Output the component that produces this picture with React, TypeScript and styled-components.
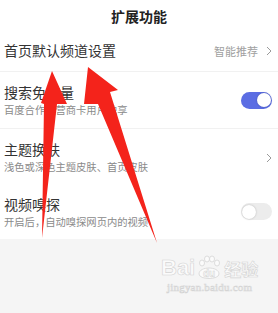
import React from 'react';
import styled, { createGlobalStyle } from 'styled-components';

const GlobalStyle = createGlobalStyle`
    html, body {
        margin: 0;
        padding: 0;
        background: #f5f5f5;
    }
    body {
        font-family: "Noto Sans CJK SC", "Noto Sans", sans-serif;
        -webkit-font-smoothing: antialiased;
    }
`;

const Page = styled.div`
    position: relative;
    width: 278px;
    height: 313px;
    overflow: hidden;
    background: #f5f5f5;
`;

const Panel = styled.div`
    background: #fff;
`;

const Title = styled.div`
    height: 30px;
    display: flex;
    align-items: center;
    justify-content: center;
    font-size: 14px;
    font-weight: 600;
    color: #222;
    padding-top: 1px;
    box-sizing: border-box;
`;

const Row = styled.div<{ $height: number; $divider?: boolean }>`
    position: relative;
    height: ${(p) => p.$height}px;
    display: flex;
    align-items: center;
    justify-content: space-between;
    padding: 0 6px 0 4px;
    box-sizing: border-box;
    border-bottom: ${(p) => (p.$divider ? '1px solid #f1f1f1' : 'none')};
`;

const TextBlock = styled.div`
    display: flex;
    flex-direction: column;
    gap: 2px;
`;

const Label = styled.div`
    font-size: 14px;
    line-height: 17px;
    color: #333;
`;

const Hint = styled.div`
    font-size: 10.3px;
    line-height: 14px;
    color: #8a8a8a;
`;

const Value = styled.div`
    display: flex;
    align-items: center;
    gap: 8px;
    font-size: 11px;
    color: #a0a0a0;
`;

const Chevron = () => (
    <svg width='6' height='10' viewBox='0 0 6 10'>
        <polyline
            points='1,1 5,5 1,9'
            fill='none'
            stroke='#9a9a9a'
            strokeWidth='1'
        />
    </svg>
);

const Track = styled.div<{ $on: boolean; $shift?: number }>`
    position: relative;
    width: 31px;
    height: 17px;
    border-radius: 9px;
    background: ${(p) => (p.$on ? '#5b6de3' : '#ececec')};
    margin-top: ${(p) => p.$shift || 0}px;
`;

const Knob = styled.div<{ $on: boolean }>`
    position: absolute;
    top: 1.5px;
    left: ${(p) => (p.$on ? '15.5px' : '1px')};
    width: 14px;
    height: 14px;
    border-radius: 50%;
    background: #fff;
    box-shadow: 0 0 2px rgba(0, 0, 0, 0.25);
`;

const Switch = ({ on, shift }: { on: boolean; shift?: number }) => (
    <Track $on={on} $shift={shift}>
        <Knob $on={on} />
    </Track>
);

const Watermark = styled.div`
    position: absolute;
    left: 161px;
    top: 255px;
    display: flex;
    flex-direction: column;
    align-items: center;
    color: #fbfbfb;
    -webkit-text-stroke: 0.6px #d4d4d4;
    font-family: "Liberation Sans", Arial, sans-serif;
`;

const MarkLine = styled.div`
    display: flex;
    align-items: flex-end;
    font-size: 22px;
    font-weight: 700;
    line-height: 24px;
`;

const MarkCjk = styled.span`
    font-family: "Noto Sans CJK SC", sans-serif;
    font-size: 17px;
    line-height: 22px;
    margin-left: 1px;
`;

const MarkUrl = styled.div`
    font-family: "Liberation Serif", serif;
    font-size: 11px;
    line-height: 12px;
    margin-top: 1px;
    letter-spacing: 0.2px;
`;

const Paw = () => (
    <svg width='26' height='26' viewBox='0 0 26 26' style={{ margin: '0 1px -1px' }}>
        <g fill='#fbfbfb' stroke='#d4d4d4' strokeWidth='0.8'>
            <ellipse cx='6' cy='8' rx='2.5' ry='3' />
            <ellipse cx='11' cy='4' rx='2.5' ry='3' />
            <ellipse cx='16' cy='4' rx='2.5' ry='3' />
            <ellipse cx='21' cy='8' rx='2.5' ry='3' />
            <path d='M3 19 C3 11 23 11 23 19 C23 25 3 25 3 19 Z' />
        </g>
        <text
            x='13'
            y='22'
            textAnchor='middle'
            fontSize='10'
            fontWeight='700'
            fontFamily='Liberation Sans, sans-serif'
            fill='#fbfbfb'
            stroke='#d4d4d4'
            strokeWidth='0.5'
        >
            du
        </text>
    </svg>
);

const Arrows = styled.svg`
    position: absolute;
    left: 0;
    top: 0;
    pointer-events: none;
`;

const App = () => {
    return (
        <Page>
            <GlobalStyle />
            <Panel>
                <Title>扩展功能</Title>
                <Row $height={42} $divider>
                    <Label>首页默认频道设置</Label>
                    <Value>
                        智能推荐
                        <Chevron />
                    </Value>
                </Row>
                <Row $height={57} $divider>
                    <TextBlock>
                        <Label>搜索免流量</Label>
                        <Hint>百度合作运营商卡用户独享</Hint>
                    </TextBlock>
                    <Switch on />
                </Row>
                <Row $height={57}>
                    <TextBlock>
                        <Label>主题换肤</Label>
                        <Hint>浅色或深色主题皮肤、首页皮肤</Hint>
                    </TextBlock>
                    <Chevron />
                </Row>
                <Row $height={53}>
                    <TextBlock>
                        <Label>视频嗅探</Label>
                        <Hint>开启后，自动嗅探网页内的视频</Hint>
                    </TextBlock>
                    <Switch on={false} shift={-2} />
                </Row>
            </Panel>
            <Watermark>
                <MarkLine>
                    Bai
                    <Paw />
                    <MarkCjk>经验</MarkCjk>
                </MarkLine>
                <MarkUrl>jingyan.baidu.com</MarkUrl>
            </Watermark>
            <Arrows width='278' height='313' viewBox='0 0 278 313'>
                <polygon
                    points='52,71 67,104 57,104 42,238 44,104 41,103'
                    fill='#f4231b'
                />
                <polygon
                    points='88,67 118,90 110,92 157,243 98,104 84,104'
                    fill='#f4231b'
                />
            </Arrows>
        </Page>
    );
};

export default App;
